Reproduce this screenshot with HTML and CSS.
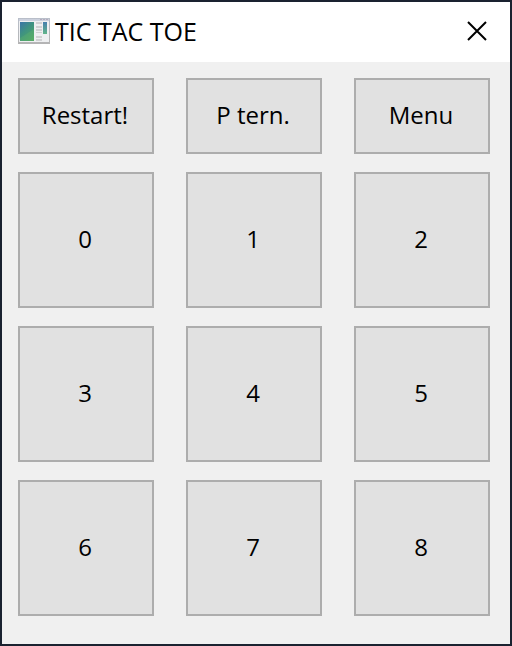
FILE: index.html
```html
<!DOCTYPE html>
<html lang="en">
<head>
<meta charset="utf-8">
<meta name="viewport" content="width=device-width, initial-scale=1">
<title>TIC TAC TOE</title>
<link rel="stylesheet" href="styles.css">
</head>
<body>
<div class="window">
  <header class="titlebar">
    <svg class="app-icon" viewBox="0 0 32 26" aria-hidden="true">
      <defs>
        <linearGradient id="frame" x1="0" y1="0" x2="0" y2="1">
          <stop offset="0" stop-color="#b9bfca"/>
          <stop offset="1" stop-color="#b4b4b4"/>
        </linearGradient>
        <linearGradient id="pane" x1="0" y1="0" x2="0.7" y2="1">
          <stop offset="0" stop-color="#3a74a8"/>
          <stop offset="0.5" stop-color="#3f9380"/>
          <stop offset="1" stop-color="#4fa468"/>
        </linearGradient>
        <linearGradient id="strip" x1="0" y1="0" x2="0" y2="1">
          <stop offset="0" stop-color="#477fae"/>
          <stop offset="1" stop-color="#62b58a"/>
        </linearGradient>
      </defs>
      <rect width="32" height="26" fill="url(#frame)"/>
      <rect x="1" y="1" width="30" height="2" fill="#cbd0dd"/>
      <path d="M22 1h2v1h-2zM25 1h2v1h-2zM28 1h2v1h-2z" fill="#b3acbd"/>
      <rect x="1" y="3" width="30" height="21" fill="#eeeff1"/>
      <rect x="2" y="4" width="14" height="19" fill="url(#pane)"/>
      <path d="M2 20L16 11v12H2z" fill="#72c86a" opacity=".2"/>
      <path d="M18 4h6v2h-6zM18 8h6v2h-6zM18 11h6v2h-6zM18 14h6v1h-6zM18 18h6v2h-6zM18 21h6v2h-6z" fill="#d0d1d3"/>
      <rect x="25" y="4" width="4" height="12" fill="url(#strip)"/>
    </svg>
    <h1 class="title">TIC TAC TOE</h1>
    <button class="close" type="button" aria-label="Close">
      <svg class="close-icon" viewBox="0 0 20 20" aria-hidden="true">
        <path d="M1 1L19 19M19 1L1 19" fill="none" stroke="#000" stroke-width="2"/>
      </svg>
    </button>
  </header>
  <main class="board">
    <button class="key" type="button">Restart!</button>
    <button class="key" type="button">P tern.</button>
    <button class="key" type="button">Menu</button>
    <button class="key cell" type="button">0</button>
    <button class="key cell" type="button">1</button>
    <button class="key cell" type="button">2</button>
    <button class="key cell" type="button">3</button>
    <button class="key cell" type="button">4</button>
    <button class="key cell" type="button">5</button>
    <button class="key cell" type="button">6</button>
    <button class="key cell" type="button">7</button>
    <button class="key cell" type="button">8</button>
  </main>
</div>
</body>
</html>
```
FILE: styles.css
```css
* {
  box-sizing: border-box;
}

body {
  margin: 0;
  font-family: "Open Sans", "Noto Sans", sans-serif;
  color: #000;
}

.window {
  min-height: 100vh;
  border: 2px solid #1a2230;
  background: #f0f0f0;
}

.titlebar {
  display: flex;
  align-items: center;
  gap: 5px;
  height: 60px;
  padding: 0 23px 2px 16px;
  background: #fff;
}

.app-icon {
  width: 32px;
  height: 26px;
}

.title {
  flex: 1;
  margin: 0;
  font-size: 25px;
  font-weight: 400;
  line-height: 32px;
}

.close {
  display: flex;
  padding: 0;
  border: 0;
  background: none;
}

.close-icon {
  width: 20px;
  height: 20px;
}

.board {
  display: grid;
  grid-template-columns: repeat(3, 1fr);
  gap: 18px 32px;
  padding: 16px 20px 28px 16px;
}

.key {
  min-height: 76px;
  padding: 0 2px 2px 0;
  border: 2px solid #adadad;
  background: #e1e1e1;
  color: inherit;
  font-family: inherit;
  font-size: 24px;
  line-height: 32px;
}

.cell {
  aspect-ratio: 1;
}
```
